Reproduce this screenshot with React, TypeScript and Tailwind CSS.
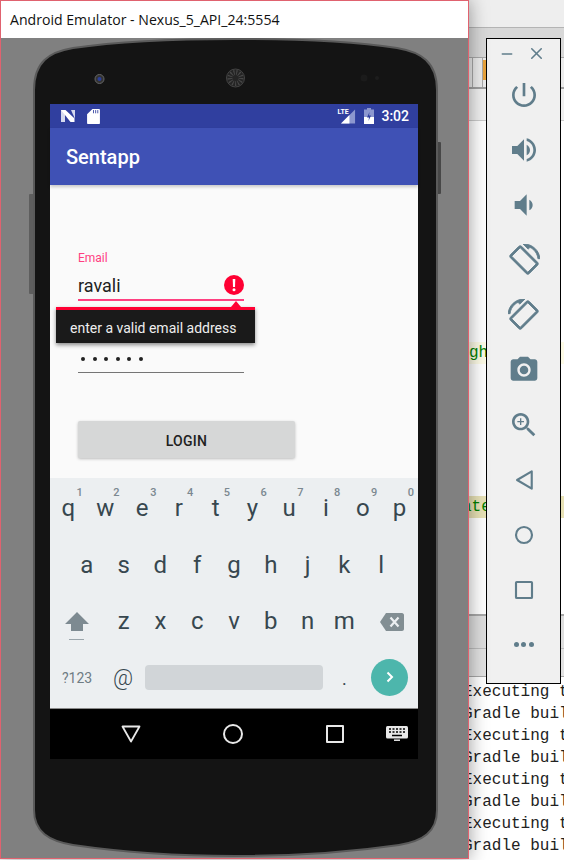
import { Minus, X } from 'lucide-react'

const ROBOTO = { fontFamily: 'Roboto, sans-serif' }

const ROW_1 = [
  ['q', '1'],
  ['w', '2'],
  ['e', '3'],
  ['r', '4'],
  ['t', '5'],
  ['y', '6'],
  ['u', '7'],
  ['i', '8'],
  ['o', '9'],
  ['p', '0'],
]
const ROW_2 = ['a', 's', 'd', 'f', 'g', 'h', 'j', 'k', 'l']
const ROW_3 = ['z', 'x', 'c', 'v', 'b', 'n', 'm']
const LOG_LINES = ['Executing t', 'Gradle buil', 'Executing t', 'Gradle buil', 'Executing t', 'Gradle buil', 'Executing t', 'Gradle buil']

const ROTATE_PATH =
  'M16.48 2.52c3.27 1.55 5.61 4.72 5.97 8.48h1.5C23.44 4.84 18.29 0 12 0l-.66.03 3.81 3.81 1.33-1.32zm-6.25-.77c-.59-.59-1.54-.59-2.12 0L1.75 8.11c-.59.59-.59 1.54 0 2.12l12.02 12.02c.59.59 1.54.59 2.12 0l6.36-6.36c.59-.59.59-1.54 0-2.12L10.23 1.75zm4.6 19.44L2.81 9.17l6.36-6.36 12.02 12.02-6.36 6.36z'

function ToolIcon({ d, rotate, flip }: { d: string; rotate?: boolean; flip?: boolean }) {
  return (
    <div className="flex h-[55px] w-full shrink-0 items-center justify-center">
      <svg
        viewBox="0 0 24 24"
        className={flip ? 'h-8 w-8 -scale-x-100 fill-[#607d8b] stroke-[#607d8b] stroke-[0.7]' : rotate ? 'h-8 w-8 fill-[#607d8b] stroke-[#607d8b] stroke-[0.7]' : 'h-8 w-8 fill-[#607d8b]'}
      >
        <path d={d} />
      </svg>
    </div>
  )
}

function ToolOutline({ children }: { children: React.ReactNode }) {
  return (
    <div className="flex h-[55px] w-full shrink-0 items-center justify-center">
      <svg viewBox="0 0 24 24" className="h-8 w-8 fill-none stroke-[#607d8b] stroke-[1.6]">
        {children}
      </svg>
    </div>
  )
}

function EmulatorToolbar() {
  return (
    <div className="absolute left-[486px] top-[38px] flex h-[646px] w-[75px] flex-col items-center border border-black bg-[#f0f0f0]">
      <div className="flex h-[28px] w-full shrink-0 items-center justify-between pl-[12px] pr-[14px] pt-[1px] text-[#607d8b]">
        <Minus size={16} strokeWidth={2.4} />
        <X size={19} strokeWidth={2} />
      </div>
      <ToolIcon d="M13 3h-2v10h2V3zm4.83 2.17l-1.42 1.42C17.99 7.86 19 9.81 19 12c0 3.87-3.13 7-7 7s-7-3.13-7-7c0-2.19 1.01-4.14 2.58-5.42L6.17 5.17C4.23 6.82 3 9.26 3 12c0 4.97 4.03 9 9 9s9-4.03 9-9c0-2.74-1.23-5.18-3.17-6.83z" />
      <ToolIcon d="M3 9v6h4l5 5V4L7 9H3zm13.5 3c0-1.77-1.02-3.29-2.5-4.03v8.05c1.48-.73 2.5-2.25 2.5-4.02zM14 3.23v2.06c2.89.86 5 3.54 5 6.71s-2.11 5.85-5 6.71v2.06c4.01-.91 7-4.49 7-8.77s-2.99-7.86-7-8.77z" />
      <ToolIcon d="M18.5 12c0-1.77-1.02-3.29-2.5-4.03v8.05c1.48-.73 2.5-2.25 2.5-4.02zM5 9v6h4l5 5V4L9 9H5z" />
      <ToolIcon d={ROTATE_PATH} rotate />
      <ToolIcon d={ROTATE_PATH} flip />
      <ToolIcon d="M9 2L7.17 4H4c-1.1 0-2 .9-2 2v12c0 1.1.9 2 2 2h16c1.1 0 2-.9 2-2V6c0-1.1-.9-2-2-2h-3.17L15 2H9zm3 15c-2.76 0-5-2.24-5-5s2.24-5 5-5 5 2.24 5 5-2.24 5-5 5zm0-8.2a3.2 3.2 0 1 0 0 6.4 3.2 3.2 0 0 0 0-6.4z" />
      <ToolIcon d="M15.5 14h-.79l-.28-.27C15.41 12.59 16 11.11 16 9.5 16 5.91 13.09 3 9.5 3S3 5.91 3 9.5 5.91 16 9.5 16c1.61 0 3.09-.59 4.23-1.57l.27.28v.79l5 4.99L20.49 19l-4.99-5zm-6 0C7.01 14 5 11.99 5 9.5S7.01 5 9.5 5 14 7.01 14 9.5 11.99 14 9.5 14zm2.5-4h-2v2H9v-2H7V9h2V7h1v2h2v1z" />
      <ToolOutline>
        <path d="M17.8 5.5v13L6.8 12z" strokeLinejoin="round" />
      </ToolOutline>
      <ToolOutline>
        <circle cx="12" cy="12" r="6" />
      </ToolOutline>
      <ToolOutline>
        <rect x="6" y="6" width="12" height="12" rx="0.6" />
      </ToolOutline>
      <div className="flex h-[55px] w-full shrink-0 items-center justify-center gap-[2.5px]">
        <span className="h-[5px] w-[5px] rounded-full bg-[#607d8b]" />
        <span className="h-[5px] w-[5px] rounded-full bg-[#607d8b]" />
        <span className="h-[5px] w-[5px] rounded-full bg-[#607d8b]" />
      </div>
    </div>
  )
}

function IdeBackdrop() {
  return (
    <div className="flex h-[860px] flex-col pl-[469px]">
      <div className="h-[28px] shrink-0 border-b border-[#b4b4b4] bg-[#eeeeee]" />
      <div className="h-[30px] shrink-0 border-b border-[#a8a8a8] bg-[#d8d8d8]" />
      <div className="flex h-[31px] shrink-0 border-b-2 border-[#a0a0a0] bg-[#ececec]">
        <div className="ml-[3px] w-[11px] border-x border-[#a8a8a8]" />
        <div className="mt-[2px] h-[20px] w-[4px] bg-[#e8a33d]" />
      </div>
      <div className="h-[32px] shrink-0 border-b border-[#cccccc] bg-[#f0f0f0]" />
      <div className="h-[221px] shrink-0 bg-white" />
      <div className="h-[22px] shrink-0 overflow-hidden bg-[#fdfbe6] font-['Liberation_Mono',monospace] text-[16px] leading-[22px] text-[#008000]">
        ght
      </div>
      <div className="h-[132px] shrink-0 bg-white" />
      <div className="-ml-[7px] h-[22px] shrink-0 overflow-hidden bg-[#e8e2b6] font-['Liberation_Mono',monospace] text-[16px] leading-[22px] text-[#008000]">
        ate
      </div>
      <div className="h-[96px] shrink-0 bg-white" />
      <div className="h-[2px] shrink-0 bg-[#a8a8a8]" />
      <div className="h-[33px] shrink-0 border-b border-[#bdbdbd] bg-[#dedede]" />
      <div className="h-[28px] shrink-0 border-b border-[#a8a8a8] bg-[#e2e2e2]" />
      <div className="-ml-[6px] flex-1 overflow-hidden bg-white pt-[4px] font-['Liberation_Mono',monospace] text-[16px] leading-[22px] text-[#222222]">
        {LOG_LINES.map((line, i) => (
          <div key={i} className="whitespace-pre">
            {line}
          </div>
        ))}
      </div>
    </div>
  )
}

function PhoneBody() {
  return (
    <svg viewBox="0 0 468 820" className="absolute left-0 top-0 h-[820px] w-[468px]">
      <rect x="435" y="104" width="5" height="52" rx="1" fill="#474747" />
      <rect x="28" y="156" width="6" height="100" rx="1" fill="#5e5e5e" />
      <path
        d="M33 52C33 24 48 14 72 10 120 3 180 1 234 1c54 0 114 2 162 9 24 4 40 14 40 42v720c0 22-14 31-38 35-48 7-110 11-164 11S120 814 72 807c-24-4-39-13-39-35z"
        fill="#141414"
        stroke="#5a5a5a"
        strokeWidth="2"
      />
      <circle cx="98.5" cy="41" r="4.5" fill="#333333" stroke="#666666" />
      <circle cx="98.5" cy="41" r="2" fill="#2b3f9a" />
      <circle cx="234.5" cy="40" r="9" fill="#242424" stroke="#444444" />
      <circle cx="234.5" cy="40" r="5.5" fill="none" stroke="#484848" strokeWidth="5" strokeDasharray="1 1.6" />
      <circle cx="363" cy="40" r="3.5" fill="#1b1b1b" />
      <circle cx="376" cy="40" r="2" fill="#1d1d1d" />
    </svg>
  )
}

function StatusBar() {
  return (
    <div className="relative flex h-6 shrink-0 items-center bg-[#303f9f] pl-[10px] pr-[9px] text-white">
      <svg viewBox="0 0 16 14" className="h-[14px] w-[16px]">
        <path d="M1 1h4v12H1z" fill="#d5d9ee" />
        <path d="M1 1h4.5l9 8.5V13h-4z" fill="#ffffff" />
        <path d="M11 1h4v9z" fill="#d5d9ee" />
      </svg>
      <svg viewBox="0 0 12 14" className="ml-[11px] h-[15px] w-[13px]">
        <path d="M5 0h6c.6 0 1 .4 1 1v12c0 .6-.4 1-1 1H1c-.6 0-1-.4-1-1V5z" fill="#ffffff" />
        <path d="M6 1v3M8 1v3M10 1v3" stroke="#303f9f" strokeWidth="0.8" />
      </svg>
      <div className="ml-auto flex items-center">
        <div className="relative h-[16px] w-[19px]">
          <span className="absolute left-0 top-[-1px] text-[7px] font-bold leading-[10px]" style={ROBOTO}>
            LTE
          </span>
          <svg viewBox="0 0 16 15" className="absolute left-[4px] top-[1px] h-[15px] w-[15px]">
            <path d="M15 0v15H0z" fill="#8c97cf" />
            <path d="M9 6v9H0z" fill="#ffffff" />
          </svg>
        </div>
        <svg viewBox="0 0 10 16" className="ml-[8px] h-[16px] w-[10px]">
          <path d="M3 0h4v1.5h3V16H0V1.5h3z" fill="#8c97cf" />
          <path d="M0 9h10v7H0z" fill="#ffffff" />
          <path d="M5.5 4 3 9.5h2L4.5 13 7 7.5H5z" fill="#303f9f" />
        </svg>
        <span className="ml-[7px] text-[14px] font-medium leading-none" style={ROBOTO}>
          3:02
        </span>
      </div>
    </div>
  )
}

function LoginForm() {
  return (
    <div className="relative flex h-[293px] shrink-0 flex-col bg-[#fafafa] px-[28px] pt-[65px]" style={ROBOTO}>
      <label className="h-4 text-[12px] leading-4 text-[#ff4081]">Email</label>
      <div className="relative h-[35px] w-[166px] border-b-2 border-[#ff4081] pt-[7px] text-[18px] leading-[26px] text-[#212121]">
        ravali
        <svg viewBox="0 0 20 20" className="absolute right-0 top-[9px] h-5 w-5">
          <circle cx="10" cy="10" r="10" fill="#ff0033" />
          <path d="M8.7 4h2.6l-.3 8H9z" fill="#ffffff" />
          <circle cx="10" cy="14.8" r="1.5" fill="#ffffff" />
        </svg>
      </div>
      <div className="h-[44px] pt-[22px] text-[12px] leading-4 text-[#757575]">Password</div>
      <div className="flex h-[28px] w-[166px] items-center gap-[7.5px] border-b border-[#757575] pl-[3px]">
        {[0, 1, 2, 3, 4, 5].map((i) => (
          <span key={i} className="h-[4px] w-[4px] rounded-full bg-[#212121]" />
        ))}
      </div>
      <button
        type="button"
        className="mt-[48px] h-[37px] w-[217px] rounded-[2px] bg-[#d6d7d7] pt-[3px] text-[14px] font-medium tracking-[0.3px] text-[#212121] shadow-[0_1px_3px_rgba(0,0,0,0.25)]"
      >
        LOGIN
      </button>

      {/* error popup, sits on top of the password label */}
      <div className="absolute left-[6px] top-[122px] w-[199px] bg-[#1a1a1a] shadow-[0_2px_4px_rgba(0,0,0,0.45)]">
        <span className="absolute right-[14px] top-[-6px] h-0 w-0 border-x-[5px] border-b-[6px] border-x-transparent border-b-[#ff0033]" />
        <div className="h-[3px] bg-[#ff0033]" />
        <div className="flex h-[33px] items-center pl-[14px] pt-[3px] text-[14px] text-[#eeeeee]">enter a valid email address</div>
      </div>
    </div>
  )
}

function Letter({ ch, hint }: { ch: string; hint?: string }) {
  return (
    <div className="relative flex h-full w-[36.8px] items-center justify-center pt-[4px] text-[24px] leading-none text-[#37474f]">
      {ch}
      {hint && (
        <span className="absolute right-[4px] top-[9px] text-[11px] font-medium leading-none text-[#7b8890]">{hint}</span>
      )}
    </div>
  )
}

function Keyboard() {
  return (
    <div className="flex h-[230px] shrink-0 flex-col bg-[#eceff1]" style={ROBOTO}>
      <div className="flex h-[56px]">
        {ROW_1.map(([ch, hint]) => (
          <Letter key={ch} ch={ch} hint={hint} />
        ))}
      </div>
      <div className="mt-[1px] flex h-[56px] pl-[18.4px]">
        {ROW_2.map((ch) => (
          <Letter key={ch} ch={ch} />
        ))}
      </div>
      <div className="flex h-[56px]">
        <div className="flex h-full w-[55.2px] flex-col items-center justify-center gap-[8px] pt-[14px]">
          <svg viewBox="0 0 24 19" className="ml-[-2px] h-[19px] w-[24px]">
            <path d="M12 0 24 12h-6v7H6v-7H0z" fill="#7d8a91" />
          </svg>
          <span className="ml-[-2px] h-[1.5px] w-[15px] bg-[#9aa5ab]" />
        </div>
        {ROW_3.map((ch) => (
          <Letter key={ch} ch={ch} />
        ))}
        <div className="flex h-full w-[55.2px] items-center justify-center pl-[3px] pt-[6px]">
          <svg viewBox="0 0 24 18" className="h-[18px] w-[24px]">
            <path d="M6 0h16c1 0 2 1 2 2v14c0 1-1 2-2 2H6L0 9z" fill="#828e93" />
            <path d="M10.5 4.5l8 9M18.5 4.5l-8 9" stroke="#eceff1" strokeWidth="2.2" />
          </svg>
        </div>
      </div>
      <div className="flex flex-1 items-center pb-[1px] pl-[12px]">
        <span className="w-[31px] whitespace-nowrap pt-[2px] text-[14px] text-[#6f7c84]">?123</span>
        <span className="ml-[20px] w-[21px] pt-[2px] text-[22px] font-light leading-none text-[#37474f]">@</span>
        <div className="ml-[11px] h-[25px] w-[178px] rounded-[4px] bg-[#d1d5d8]" />
        <span className="ml-[19px] w-[4px] pt-[4px] text-[18px] leading-none text-[#37474f]">.</span>
        <div className="ml-[25px] flex h-[37px] w-[37px] items-center justify-center rounded-full bg-[#4db6ac]">
          <svg viewBox="0 0 10 12" className="h-[12px] w-[10px] fill-none stroke-white stroke-2">
            <path d="M2.5 1.5 7 6l-4.5 4.5" />
          </svg>
        </div>
      </div>
    </div>
  )
}

function NavBar() {
  return (
    <div className="flex h-[51px] shrink-0 items-center border-t border-[#8a8a8a] bg-black pb-[1px] pl-[30px]">
      <div className="flex w-[102px] justify-center">
        <svg viewBox="0 0 20 18" className="h-[18px] w-[20px] fill-none stroke-[#e8e8e8] stroke-[1.8]">
          <path d="M1.5 1.5h17L10 16.5z" strokeLinejoin="round" />
        </svg>
      </div>
      <div className="flex w-[102px] justify-center">
        <span className="h-[20px] w-[20px] rounded-full border-2 border-[#e8e8e8]" />
      </div>
      <div className="flex w-[102px] justify-center">
        <span className="h-[18px] w-[18px] rounded-[1px] border-2 border-[#e8e8e8]" />
      </div>
      <svg viewBox="0 0 22 15" className="h-[15px] w-[22px]">
        <rect width="22" height="12.5" rx="1.5" fill="#e8e8e8" />
        <path d="M3 3h2M6.5 3h2M10 3h2M13.5 3h2M17 3h2M3 6h2M6.5 6h2M10 6h2M13.5 6h2M17 6h2" stroke="#000000" strokeWidth="1.5" />
        <path d="M6 9.5h10" stroke="#000000" strokeWidth="1.5" />
        <path d="M8 14.2h6" stroke="#e8e8e8" strokeWidth="1.5" />
      </svg>
    </div>
  )
}

export default function App() {
  return (
    <div className="relative h-[860px] w-[564px] overflow-hidden bg-white">
      <IdeBackdrop />
      <EmulatorToolbar />

      {/* emulator window */}
      <div className="absolute left-0 top-0 flex h-[859px] w-[469px] flex-col border border-[#e0626f] shadow-[0_0_18px_rgba(0,0,0,0.4)]">
        <div className="flex h-[37px] shrink-0 items-center bg-white pl-[9px] font-['Open_Sans',sans-serif] text-[14.1px] text-[#111111]">
          Android Emulator - Nexus_5_API_24:5554
        </div>
        <div className="relative flex-1 bg-[#808080] pl-[49px] pt-[66px]">
          <PhoneBody />
          <div className="relative flex h-[655px] w-[368px] flex-col">
            <StatusBar />
            <div className="relative z-10 flex h-[57px] shrink-0 items-center bg-[#3f51b5] pl-4 pt-[1px] text-[20px] font-medium text-white shadow-[0_2px_3px_rgba(0,0,0,0.2)]" style={ROBOTO}>
              Sentapp
            </div>
            <LoginForm />
            <Keyboard />
            <NavBar />
          </div>
        </div>
      </div>
    </div>
  )
}
